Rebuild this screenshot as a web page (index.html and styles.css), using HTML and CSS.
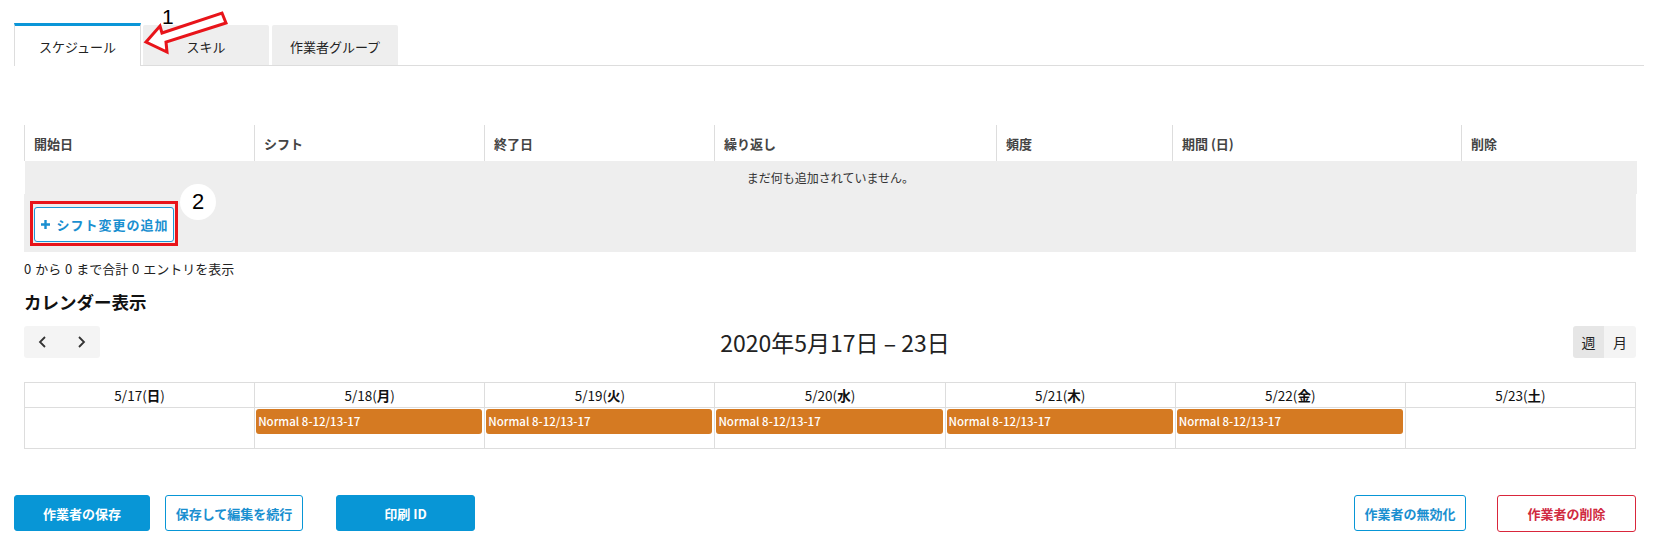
FILE: index.html
```html
<!DOCTYPE html>
<html lang="ja">
<head>
<meta charset="utf-8">
<title>作業者</title>
<link rel="stylesheet" href="styles.css">
</head>
<body>
<div class="page">
  <div class="tabs">
    <div class="tab active">スケジュール</div>
    <div class="tab">スキル</div>
    <div class="tab">作業者グループ</div>
    <div class="note-arrow">
      <span class="note-num">1</span>
      <svg width="110" height="60" viewBox="0 0 110 60"><polygon points="12,42 26,26 28,33 88,13 92,23 32,42 33,52" fill="#fff" stroke="#e8141a" stroke-width="3" stroke-linejoin="miter"/></svg>
    </div>
  </div>

  <div class="content">
    <table class="grid">
      <thead>
        <tr>
          <th class="c1">開始日</th>
          <th class="c2">シフト</th>
          <th class="c3">終了日</th>
          <th class="c4">繰り返し</th>
          <th class="c5">頻度</th>
          <th class="c6">期間 (日)</th>
          <th class="c7">削除</th>
        </tr>
      </thead>
      <tbody>
        <tr><td class="empty" colspan="7">まだ何も追加されていません。</td></tr>
      </tbody>
    </table>
    <div class="add-area">
      <span class="highlight"><button class="btn-add"><svg class="plus" width="9" height="9" viewBox="0 0 9 9"><path d="M4.5 0 V9 M0 4.5 H9" stroke="#1a8fd0" stroke-width="2.4"/></svg>シフト変更の追加</button></span>
      <span class="note-circle">2</span>
    </div>
    <p class="info">0 から 0 まで合計 0 エントリを表示</p>

    <h2 class="cal-title">カレンダー表示</h2>
    <div class="toolbar">
      <div class="nav">
        <span class="nav-btn"><svg width="10" height="14" viewBox="0 0 10 14"><path d="M7 2 L2 7 L7 12" fill="none" stroke="#333" stroke-width="1.8"/></svg></span>
        <span class="nav-btn"><svg width="10" height="14" viewBox="0 0 10 14"><path d="M3 2 L8 7 L3 12" fill="none" stroke="#333" stroke-width="1.8"/></svg></span>
      </div>
      <div class="range">2020年5月17日 – 23日</div>
      <div class="views"><span class="view on">週</span><span class="view">月</span></div>
    </div>

    <table class="cal">
      <thead>
        <tr>
          <th>5/17(<b>日</b>)</th>
          <th>5/18(<b>月</b>)</th>
          <th>5/19(<b>火</b>)</th>
          <th>5/20(<b>水</b>)</th>
          <th>5/21(<b>木</b>)</th>
          <th>5/22(<b>金</b>)</th>
          <th>5/23(<b>土</b>)</th>
        </tr>
      </thead>
      <tbody>
        <tr>
          <td></td>
          <td><div class="event">Normal 8-12/13-17</div></td>
          <td><div class="event">Normal 8-12/13-17</div></td>
          <td><div class="event">Normal 8-12/13-17</div></td>
          <td><div class="event">Normal 8-12/13-17</div></td>
          <td><div class="event">Normal 8-12/13-17</div></td>
          <td></td>
        </tr>
      </tbody>
    </table>
  </div>

  <div class="actions">
    <div class="group">
      <button class="btn solid w136">作業者の保存</button>
      <button class="btn outline w138 gap15">保存して編集を続行</button>
      <button class="btn solid w139 gap33">印刷 ID</button>
    </div>
    <div class="group">
      <button class="btn outline w112">作業者の無効化</button>
      <button class="btn danger w139 gap31">作業者の削除</button>
    </div>
  </div>
</div>
</body>
</html>
```

FILE: styles.css
```css
* { box-sizing: border-box; }
html, body { margin: 0; padding: 0; background: #fff; }
body {
  font-family: "Noto Sans CJK JP", "Noto Sans", sans-serif;
  color: #222;
  font-size: 13px;
}
.page { padding: 23px 24px 0 14px; }

/* tabs */
.tabs {
  position: relative;
  display: flex;
  align-items: flex-end;
  height: 43px;
  border-bottom: 1px solid #ddd;
  margin-right: -8px;
}
.tab {
  height: 40px;
  width: 126px;
  margin-right: 3px;
  background: #eee;
  border-radius: 2px 2px 0 0;
  display: flex;
  align-items: center;
  justify-content: center;
  font-size: 13px;
  color: #222;
  padding-top: 2px;
}
.tab.active {
  width: 127px;
  height: 43px;
  margin-bottom: -1px;
  margin-right: 2px;
  background: #fff;
  border-top: 3px solid #0a96d8;
  border-left: 1px solid #ddd;
  border-right: 1px solid #ddd;
  border-radius: 0;
  padding-top: 0;
}
.note-arrow {
  position: absolute;
  left: 120px;
  top: -23px;
  width: 110px;
  height: 60px;
}
.note-arrow svg { position: absolute; left: 0; top: 0; }
.note-num {
  position: absolute;
  left: 28px;
  top: 6px;
  font-family: "Liberation Sans", Arial, sans-serif;
  font-size: 21px;
  line-height: 21px;
  color: #000;
}

/* schedule table */
.content { margin-left: 10px; }
.grid {
  width: 1612px;
  margin-top: 59px;
  border-collapse: collapse;
  table-layout: fixed;
}
.c1, .c2, .c3 { width: 230px; }
.c4 { width: 282px; }
.c5 { width: 176px; }
.c6 { width: 289px; }
.c7 { width: 175px; }
.grid th {
  height: 36px;
  padding: 0 9px;
  text-align: left;
  font-size: 13px;
  font-weight: 700;
  color: #444;
  border-left: 1px solid #ddd;
  background: #fff;
}
.grid td.empty {
  height: 33px;
  background: #eee;
  text-align: center;
  font-size: 12px;
  color: #333;
  padding: 0;
}
.add-area {
  position: relative;
  background: #eee;
  padding: 7px 6px 6px;
  width: 1612px;
}
.highlight {
  display: inline-block;
  border: 3px solid #e8141a;
  padding: 3px 1px 1px 1px;
}
.btn-add {
  display: flex;
  align-items: center;
  justify-content: center;
  width: 140px;
  height: 35px;
  background: #fff;
  border: 1px solid #1a96d6;
  border-radius: 3px;
  color: #1a8fd0;
  font-family: inherit;
  font-size: 13px;
  font-weight: 700;
  letter-spacing: 1px;
  padding: 0 0 0 2px;
}
.plus { margin-right: 6px; }
.note-circle {
  position: absolute;
  left: 156px;
  top: -10px;
  width: 36px;
  height: 36px;
  border-radius: 50%;
  background: #fff;
  font-family: "Liberation Sans", Arial, sans-serif;
  font-size: 22px;
  line-height: 36px;
  text-align: center;
  color: #000;
}
.info {
  margin: 8px 0 0;
  font-size: 13px;
  line-height: 18px;
  color: #222;
  word-spacing: 1px;
}
.cal-title {
  margin: 12px 0 0;
  font-size: 17.5px;
  line-height: 24px;
  font-weight: 700;
  color: #111;
}

/* toolbar */
.toolbar {
  width: 1612px;
  margin-top: 12px;
  display: grid;
  grid-template-columns: 1fr auto 1fr;
  align-items: center;
}
.nav {
  display: flex;
  width: 76px;
  height: 32px;
  background: #f4f4f4;
  border-radius: 3px;
}
.nav-btn {
  flex: 1;
  display: flex;
  align-items: center;
  justify-content: center;
}
.range {
  font-size: 23px;
  font-weight: 400;
  color: #222;
  line-height: 32px;
  padding-left: 10px;
}
.views {
  justify-self: end;
  display: flex;
  height: 32px;
  border-radius: 3px;
  overflow: hidden;
}
.view {
  width: 32px;
  display: flex;
  align-items: center;
  justify-content: center;
  background: #f4f4f4;
  font-size: 14px;
  color: #222;
}
.view.on { background: #e6e6e6; width: 31px; }

/* calendar */
.cal {
  width: 1612px;
  margin-top: 24px;
  border-collapse: collapse;
  table-layout: fixed;
}
.cal th {
  height: 25px;
  border: 1px solid #ddd;
  font-size: 13.5px;
  font-weight: 400;
  color: #111;
  padding: 0;
}
.cal th b { font-weight: 700; }
.cal td {
  height: 41px;
  border: 1px solid #ddd;
  padding: 1px 2px 0 1px;
  vertical-align: top;
}
.event {
  height: 25px;
  background: #d57a22;
  border-radius: 3px;
  color: #fff;
  font-size: 11.5px;
  font-weight: 500;
  line-height: 25px;
  padding-left: 2px;
  white-space: nowrap;
  overflow: hidden;
}

/* actions */
.actions {
  margin-top: 46px;
  display: flex;
  justify-content: space-between;
}
.group { display: flex; }
.btn {
  height: 36px;
  border-radius: 3px;
  font-family: inherit;
  font-size: 13px;
  font-weight: 700;
  padding: 0;
}
.solid { background: #0896d6; border: 1px solid #0896d6; color: #fff; }
.outline { background: #fff; border: 1px solid #0896d6; color: #1a8fd0; }
.danger { background: #fff; border: 1px solid #d9263b; color: #d02a3f; height: 37px; }
.w112 { width: 112px; }
.w136 { width: 136px; }
.w138 { width: 138px; }
.w139 { width: 139px; }
.gap15 { margin-left: 15px; }
.gap31 { margin-left: 31px; }
.gap33 { margin-left: 33px; }
```
